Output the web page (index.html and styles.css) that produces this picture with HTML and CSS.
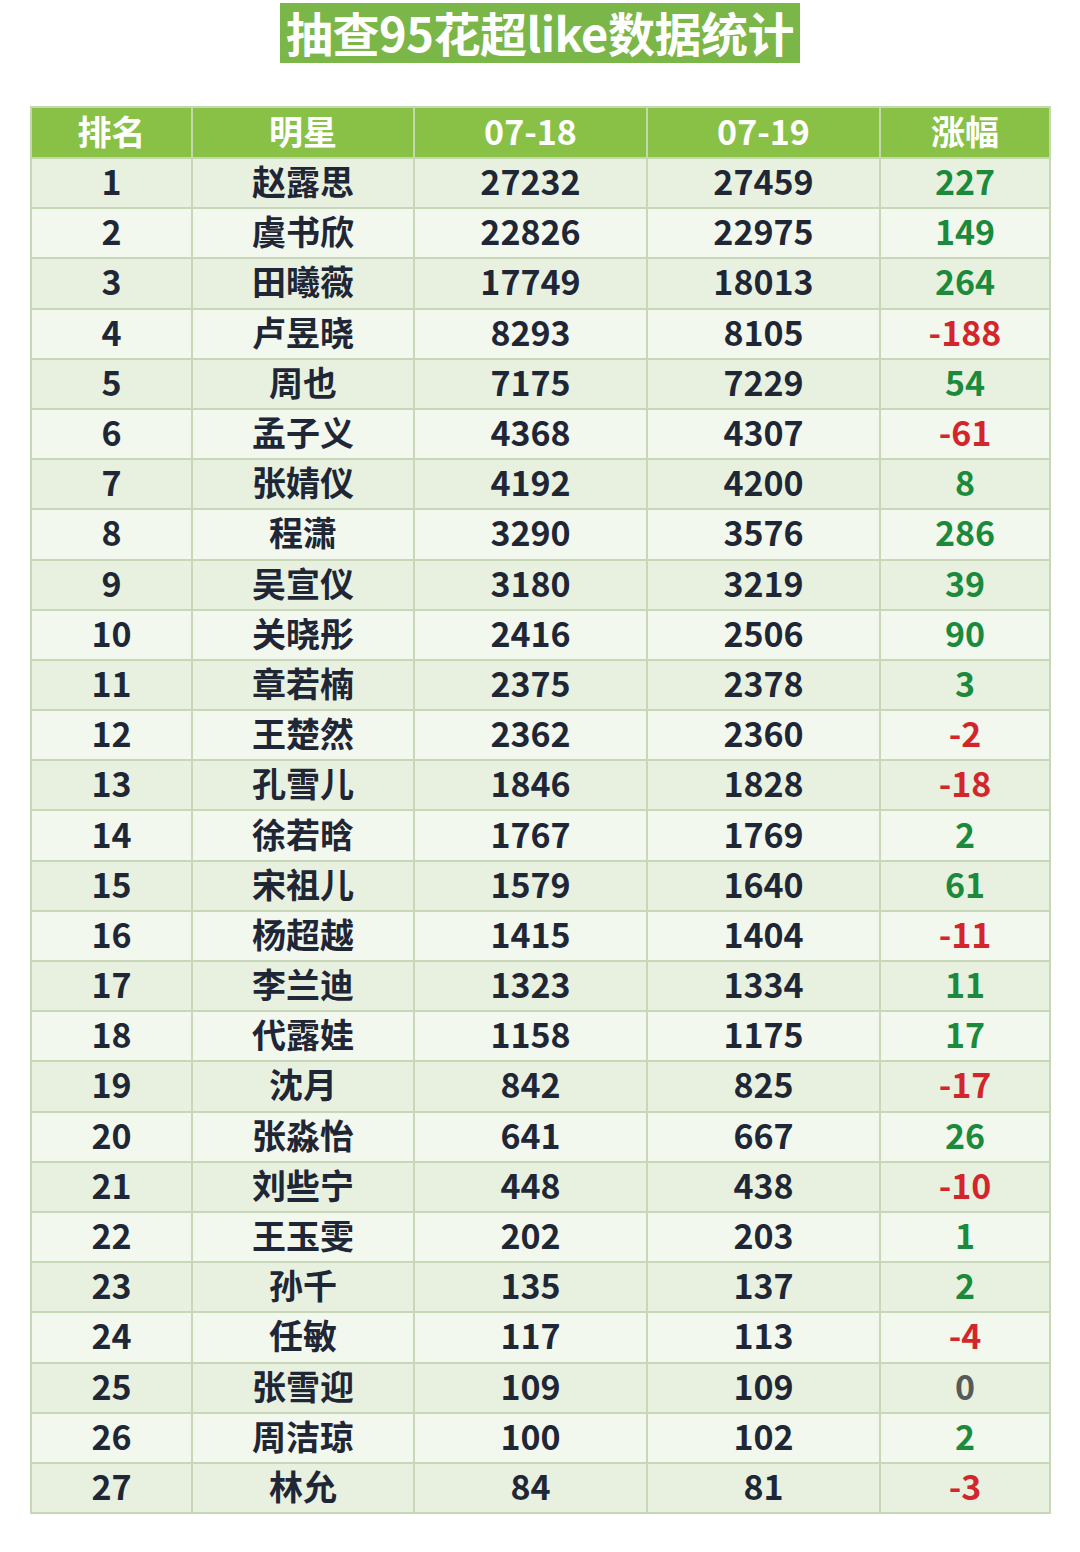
FILE: index.html
```html
<!DOCTYPE html>
<html>
<head>
<meta charset="utf-8">
<link rel="stylesheet" href="styles.css">
</head>
<body>
<div class="page">
  <div class="title-wrap"><h1 class="title">抽查95花超like数据统计</h1></div>
  <table class="stats">
    <colgroup>
      <col class="c1"><col class="c2"><col class="c3"><col class="c4"><col class="c5">
    </colgroup>
    <thead>
      <tr><th>排名</th><th>明星</th><th>07-18</th><th>07-19</th><th>涨幅</th></tr>
    </thead>
    <tbody>
      <tr><td>1</td><td>赵露思</td><td>27232</td><td>27459</td><td class="up">227</td></tr>
      <tr><td>2</td><td>虞书欣</td><td>22826</td><td>22975</td><td class="up">149</td></tr>
      <tr><td>3</td><td>田曦薇</td><td>17749</td><td>18013</td><td class="up">264</td></tr>
      <tr><td>4</td><td>卢昱晓</td><td>8293</td><td>8105</td><td class="down">-188</td></tr>
      <tr><td>5</td><td>周也</td><td>7175</td><td>7229</td><td class="up">54</td></tr>
      <tr><td>6</td><td>孟子义</td><td>4368</td><td>4307</td><td class="down">-61</td></tr>
      <tr><td>7</td><td>张婧仪</td><td>4192</td><td>4200</td><td class="up">8</td></tr>
      <tr><td>8</td><td>程潇</td><td>3290</td><td>3576</td><td class="up">286</td></tr>
      <tr><td>9</td><td>吴宣仪</td><td>3180</td><td>3219</td><td class="up">39</td></tr>
      <tr><td>10</td><td>关晓彤</td><td>2416</td><td>2506</td><td class="up">90</td></tr>
      <tr><td>11</td><td>章若楠</td><td>2375</td><td>2378</td><td class="up">3</td></tr>
      <tr><td>12</td><td>王楚然</td><td>2362</td><td>2360</td><td class="down">-2</td></tr>
      <tr><td>13</td><td>孔雪儿</td><td>1846</td><td>1828</td><td class="down">-18</td></tr>
      <tr><td>14</td><td>徐若晗</td><td>1767</td><td>1769</td><td class="up">2</td></tr>
      <tr><td>15</td><td>宋祖儿</td><td>1579</td><td>1640</td><td class="up">61</td></tr>
      <tr><td>16</td><td>杨超越</td><td>1415</td><td>1404</td><td class="down">-11</td></tr>
      <tr><td>17</td><td>李兰迪</td><td>1323</td><td>1334</td><td class="up">11</td></tr>
      <tr><td>18</td><td>代露娃</td><td>1158</td><td>1175</td><td class="up">17</td></tr>
      <tr><td>19</td><td>沈月</td><td>842</td><td>825</td><td class="down">-17</td></tr>
      <tr><td>20</td><td>张淼怡</td><td>641</td><td>667</td><td class="up">26</td></tr>
      <tr><td>21</td><td>刘些宁</td><td>448</td><td>438</td><td class="down">-10</td></tr>
      <tr><td>22</td><td>王玉雯</td><td>202</td><td>203</td><td class="up">1</td></tr>
      <tr><td>23</td><td>孙千</td><td>135</td><td>137</td><td class="up">2</td></tr>
      <tr><td>24</td><td>任敏</td><td>117</td><td>113</td><td class="down">-4</td></tr>
      <tr><td>25</td><td>张雪迎</td><td>109</td><td>109</td><td class="zero">0</td></tr>
      <tr><td>26</td><td>周洁琼</td><td>100</td><td>102</td><td class="up">2</td></tr>
      <tr><td>27</td><td>林允</td><td>84</td><td>81</td><td class="down">-3</td></tr>
    </tbody>
  </table>
</div>
</body>
</html>
```
FILE: styles.css
```css
html, body {
  margin: 0;
  padding: 0;
  background: #ffffff;
}
.page {
  width: 1080px;
  padding-top: 3px;
  font-family: "Noto Sans CJK SC", "Noto Sans", sans-serif;
  font-weight: 700;
}
.title-wrap {
  display: flex;
  justify-content: center;
}
.title {
  margin: 0;
  width: 520px;
  height: 60px;
  background: #7ab648;
  color: #ffffff;
  font-size: 47px;
  line-height: 58px;
  text-align: center;
  font-weight: 700;
  letter-spacing: -0.5px;
  white-space: nowrap;
}
.stats {
  margin: 43px 0 0 30px;
  width: 1019px;
  border-collapse: collapse;
  table-layout: fixed;
  border: 2px solid #c6d4b4;
}
.c1 { width: 161px; }
.c2 { width: 222px; }
.c3 { width: 233px; }
.c4 { width: 233px; }
.c5 { width: 170px; }
.stats th, .stats td {
  border: 2px solid #c9d7b9;
  padding: 0 0 4px 0;
  text-align: center;
  vertical-align: middle;
  font-size: 34px;
  font-weight: 700;
}
.stats th {
  background: #89c146;
  color: #ffffff;
  height: 45px;
  line-height: 45px;
  border-color: #c4d8ad;
}
.stats td {
  height: 44.2px;
  line-height: 44px;
  color: #1f2636;
}
.stats tbody tr:nth-child(odd) td { background: #e8f1df; }
.stats tbody tr:nth-child(even) td { background: #f2f8ee; }
.stats td.up { color: #1c8a3c; }
.stats td.down { color: #d3262c; }
.stats td.zero { color: #555a5a; }
```
